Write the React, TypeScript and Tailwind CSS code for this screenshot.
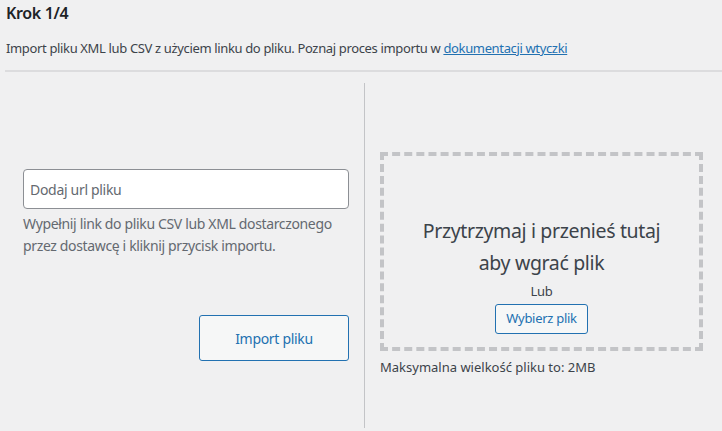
export default function App() {
  const font = { fontFamily: '"Segoe UI", "Noto Sans", sans-serif', letterSpacing: '-0.022em' };
  return (
    <div className="w-[722px] h-[431px] bg-[#f0f0f1] text-[#3c434a] overflow-hidden" style={font}>
      <div className="pl-[6px] pt-[2px]">
        <h2 className="text-[16px] leading-[22px] font-semibold text-[#1d2327]">Krok 1/4</h2>
        <p className="mt-[14px] text-[13px] leading-[20px]">
          Import pliku XML lub CSV z użyciem linku do pliku. Poznaj proces importu w{' '}
          <a href="#" className="text-[#2271b1] underline">dokumentacji wtyczki</a>
        </p>
      </div>
      <div className="mt-[12px] ml-[5px] h-[2px] bg-[#dcdcde]" />
      <div className="flex mt-[11px] h-[345px]">
        <div className="w-[365px] border-r border-[#c3c4c7] pl-[23px] pr-[15px] pt-[86px]">
          <input
            type="text"
            placeholder="Dodaj url pliku"
            className="w-full h-[40px] bg-white border border-[#8c8f94] rounded-[4px] px-[6px] text-[14px] text-[#2c3338] placeholder:text-[#646970] outline-none"
            style={font}
          />
          <p className="mt-[4px] text-[14px] leading-[22px] text-[#646970]">
            Wypełnij link do pliku CSV lub XML dostarczonego przez dostawcę i kliknij przycisk importu.
          </p>
          <div className="flex justify-end mt-[58px]">
            <button
              className="w-[150px] h-[46px] border border-[#2271b1] rounded-[3px] bg-[#f6f7f7] text-[#2271b1] text-[14px]"
              style={font}
            >
              Import pliku
            </button>
          </div>
        </div>
        <div className="flex-1 pl-[15px] pr-[19px] pt-[69px]">
          <div className="h-[199px] border-[4px] border-dashed border-[#c3c4c7] flex flex-col items-center pt-[59px]">
            <p className="text-[19.5px] leading-[32px] text-center text-[#3c434a]">
              Przytrzymaj i przenieś tutaj
              <br />
              aby wgrać plik
            </p>
            <p className="mt-[2px] text-[13px] leading-[20px]">Lub</p>
            <button
              className="mt-[3px] h-[30px] px-[10px] border border-[#2271b1] rounded-[3px] bg-[#f6f7f7] text-[#2271b1] text-[13px]"
              style={font}
            >
              Wybierz plik
            </button>
          </div>
          <p className="mt-[6px] text-[13px] leading-[20px] tracking-normal">Maksymalna wielkość pliku to: 2MB</p>
        </div>
      </div>
    </div>
  );
}
